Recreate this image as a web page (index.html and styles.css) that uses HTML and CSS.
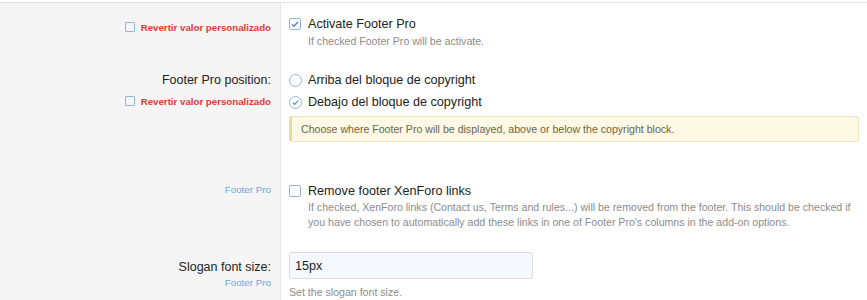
FILE: index.html
```html
<!DOCTYPE html>
<html lang="en">
<head>
    <meta charset="UTF-8">
    <title>Footer Pro options</title>
    <link rel="stylesheet" href="styles.css">
</head>
<body>
    <div class="options">
        <!-- activate -->
        <div class="form-row row-first">
            <div class="row-label">
                <label class="revert"><span class="box"></span>Revertir valor personalizado</label>
            </div>
            <div class="row-input">
                <label class="choice">
                    <svg class="ico" width="12" height="12" viewBox="0 0 12 12"><rect x="0.5" y="0.5" width="11" height="11" rx="1.5" fill="#fff" stroke="#8fb5dc"/><path d="M3 6.2l2 2 4-4.4" fill="none" stroke="#4a8bd0" stroke-width="1.3"/></svg>
                    Activate Footer Pro
                </label>
                <div class="hint">If checked Footer Pro will be activate.</div>
            </div>
        </div>

        <!-- position -->
        <div class="form-row row-position">
            <div class="row-label">
                <div class="title">Footer Pro position:</div>
                <label class="revert"><span class="box"></span>Revertir valor personalizado</label>
            </div>
            <div class="row-input">
                <label class="choice radio">
                    <svg class="ico" width="13" height="13" viewBox="0 0 13 13"><circle cx="6.5" cy="6.5" r="6" fill="#fff" stroke="#8fb5dc"/></svg>
                    Arriba del bloque de copyright
                </label>
                <label class="choice radio">
                    <svg class="ico" width="13" height="13" viewBox="0 0 13 13"><circle cx="6.5" cy="6.5" r="6" fill="#fff" stroke="#8fb5dc"/><path d="M3.8 6.7l1.8 1.8 3.6-3.8" fill="none" stroke="#4a8bd0" stroke-width="1.2"/></svg>
                    Debajo del bloque de copyright
                </label>
                <div class="explain">Choose where Footer Pro will be displayed, above or below the copyright block.</div>
            </div>
        </div>

        <!-- links -->
        <div class="form-row row-links">
            <div class="row-label">
                <div class="addon">Footer Pro</div>
            </div>
            <div class="row-input">
                <label class="choice">
                    <svg class="ico" width="12" height="12" viewBox="0 0 12 12"><rect x="0.5" y="0.5" width="11" height="11" rx="1.5" fill="#fff" stroke="#8fb5dc"/></svg>
                    Remove footer XenForo links
                </label>
                <div class="hint hint-long">If checked, XenForo links (Contact us, Terms and rules...) will be removed from the footer. This should be checked if you have chosen to automatically add these links in one of Footer Pro's columns in the add-on options.</div>
            </div>
        </div>

        <!-- slogan -->
        <div class="form-row row-slogan">
            <div class="row-label">
                <div class="title">Slogan font size:</div>
                <div class="addon">Footer Pro</div>
            </div>
            <div class="row-input">
                <input class="text-input" type="text" value="15px">
                <div class="hint">Set the slogan font size.</div>
            </div>
        </div>
    </div>
</body>
</html>
```

FILE: styles.css
```css
body {
    margin: 0;
    padding-top: 2px;
    font-family: "Liberation Sans", Arial, sans-serif;
    background: #fff;
    color: #222;
}
.options {
    border-top: 1px solid #dbe5ef;
}
.form-row {
    display: grid;
    grid-template-columns: 281px 1fr;
}
.row-label {
    background: #f5f5f5;
    border-right: 1px solid #e6e6e6;
    text-align: right;
    padding: 10px 9px 10px 0;
}
.row-input {
    padding: 10px 8px 10px 8px;
}
.title {
    font-size: 12.5px;
    line-height: 18px;
}
.revert {
    display: block;
    font-size: 9.7px;
    line-height: 16px;
    font-weight: bold;
    color: #df3b34;
}
.revert .box {
    display: inline-block;
    width: 8px;
    height: 8px;
    border: 1px solid #92b6da;
    border-radius: 1px;
    vertical-align: -1px;
    margin-right: 6px;
}
.addon {
    font-size: 9.8px;
    line-height: 14px;
    color: #6ea5dc;
}
.choice {
    display: flex;
    align-items: center;
    gap: 7px;
    font-size: 12.6px;
    line-height: 18px;
}
.choice .ico {
    flex: none;
}
.radio {
    line-height: 22px;
    gap: 6px;
}
.hint {
    font-size: 10.6px;
    line-height: 16px;
    color: #8c8c8c;
    padding-left: 19px;
}
.hint-long {
    line-height: 15px;
}
.explain {
    margin-top: 3px;
    font-size: 10.6px;
    line-height: 16px;
    color: #6b6547;
    background: #fdf9e4;
    border: 1px solid #ebe3bd;
    border-left: 3px solid #e5dc97;
    border-radius: 3px;
    padding: 4px 9px;
}

/* row specific spacing */
.row-first .row-input {
    padding-top: 12px;
}
.row-first .row-label {
    padding-top: 17px;
}
.row-position .title {
    line-height: 22px;
}
.row-position .revert {
    margin-top: 3px;
}
.row-links .row-input {
    padding-top: 30px;
}
.row-links .row-label {
    padding-top: 31px;
}
.row-slogan .row-label {
    padding-top: 18px;
}
.row-slogan .row-input {
    padding-top: 12px;
}
.text-input {
    display: block;
    box-sizing: border-box;
    width: 244px;
    height: 27px;
    margin: 0;
    padding: 0 5px;
    font-family: inherit;
    font-size: 12.6px;
    color: #222;
    background: #f5f9fd;
    border: 1px solid #dcdcdc;
    border-radius: 3px;
}
.row-slogan .hint {
    padding-left: 0;
    margin-top: 6px;
    line-height: 14px;
}
```
